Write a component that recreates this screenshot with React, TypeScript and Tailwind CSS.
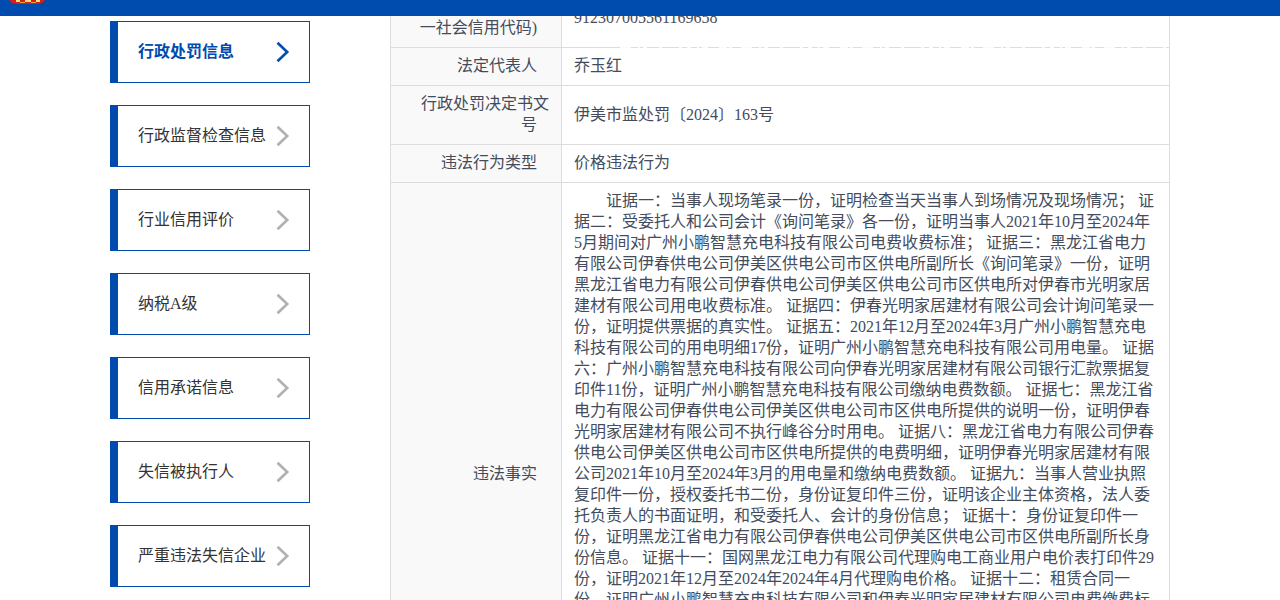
import React from 'react';

interface NavItem {
  label: string;
  active?: boolean;
}

interface DetailRow {
  label: string;
  value: string;
}

const navItems: NavItem[] = [
  { label: '行政处罚信息', active: true },
  { label: '行政监督检查信息' },
  { label: '行业信用评价' },
  { label: '纳税A级' },
  { label: '信用承诺信息' },
  { label: '失信被执行人' },
  { label: '严重违法失信企业' },
];

const rows: DetailRow[] = [
  { label: '行政相对人代码(统一社会信用代码)', value: '912307005561169658' },
  { label: '法定代表人', value: '乔玉红' },
  { label: '行政处罚决定书文号', value: '伊美市监处罚〔2024〕163号' },
  { label: '违法行为类型', value: '价格违法行为' },
];

const facts = [
  '证据一：当事人现场笔录一份，证明检查当天当事人到场情况及现场情况；',
  '证据二：受委托人和公司会计《询问笔录》各一份，证明当事人2021年10月至2024年5月期间对广州小鹏智慧充电科技有限公司电费收费标准；',
  '证据三：黑龙江省电力有限公司伊春供电公司伊美区供电公司市区供电所副所长《询问笔录》一份，证明黑龙江省电力有限公司伊春供电公司伊美区供电公司市区供电所对伊春市光明家居建材有限公司用电收费标准。',
  '证据四：伊春光明家居建材有限公司会计询问笔录一份，证明提供票据的真实性。',
  '证据五：2021年12月至2024年3月广州小鹏智慧充电科技有限公司的用电明细17份，证明广州小鹏智慧充电科技有限公司用电量。',
  '证据六：广州小鹏智慧充电科技有限公司向伊春光明家居建材有限公司银行汇款票据复印件11份，证明广州小鹏智慧充电科技有限公司缴纳电费数额。',
  '证据七：黑龙江省电力有限公司伊春供电公司伊美区供电公司市区供电所提供的说明一份，证明伊春光明家居建材有限公司不执行峰谷分时用电。',
  '证据八：黑龙江省电力有限公司伊春供电公司伊美区供电公司市区供电所提供的电费明细，证明伊春光明家居建材有限公司2021年10月至2024年3月的用电量和缴纳电费数额。',
  '证据九：当事人营业执照复印件一份，授权委托书二份，身份证复印件三份，证明该企业主体资格，法人委托负责人的书面证明，和受委托人、会计的身份信息；',
  '证据十：身份证复印件一份，证明黑龙江省电力有限公司伊春供电公司伊美区供电公司市区供电所副所长身份信息。',
  '证据十一：国网黑龙江电力有限公司代理购电工商业用户电价表打印件29份，证明2021年12月至2024年2024年4月代理购电价格。',
  '证据十二：租赁合同一份，证明广州小鹏智慧充电科技有限公司和伊春光明家居建材有限公司电费缴费标准。',
];

const NBSP = '\u00a0';

const Emblem: React.FC = () => (
  <svg className="block" width="40" height="5" viewBox="0 0 40 5" aria-hidden="true">
    <path d="M1 0H37L34 3L29 4H9L4 3Z" fill="#d81e1a" />
    <path d="M8 0H12V2H8ZM17 0H23V2H17ZM28 0H32V2H28Z" fill="#f7e07a" />
    <path d="M12 2H17V3H12ZM23 2H28V3H23Z" fill="#f0a828" />
  </svg>
);

const Chevron: React.FC<{ active?: boolean }> = ({ active }) => (
  <svg
    className={active ? 'shrink-0 text-[#004bae]' : 'shrink-0 text-[#b0b0b0]'}
    width="14"
    height="22"
    viewBox="0 0 14 22"
    fill="none"
    stroke="currentColor"
    strokeWidth="2.6"
    aria-hidden="true"
  >
    <path d="M1.5 1.8L11.2 11L1.5 20.2" />
  </svg>
);

// white flecks from the banner that break up the first row's border
const BannerFlecks: React.FC = () => (
  <svg className="absolute top-[31px] right-0 h-px w-[550px]" viewBox="0 0 550 1" aria-hidden="true">
    <path
      d="M0 0.5H550"
      stroke="#ffffff"
      strokeOpacity="0.85"
      strokeDasharray="11 7 2 3 4 12 3 17 3 5 4 6 2 3 6 11 8 2 3 9"
    />
  </svg>
);

const SideNav: React.FC = () => (
  <nav className="flex w-[200px] shrink-0 flex-col gap-[22px] pt-[5px]">
    {navItems.map((item) => (
      <a
        key={item.label}
        href="#"
        className={`flex h-[62px] items-center justify-between whitespace-nowrap border border-l-8 border-[#004bae] bg-white pr-[19px] pl-5 ${
          item.active ? 'font-bold text-[#004bae]' : 'text-[#333333]'
        }`}
      >
        <span className="pb-0.5">{item.label}</span>
        <Chevron active={item.active} />
      </a>
    ))}
  </nav>
);

const DetailTable: React.FC = () => (
  <table className="-mt-7 w-full table-fixed border-collapse text-[#444c5c]">
    <colgroup>
      <col className="w-[171px]" />
      <col />
    </colgroup>
    <tbody>
      {rows.map((row) => (
        <tr key={row.label}>
          <th
            scope="row"
            className="border border-[#dddddd] bg-[#f9f9f9] px-3 pt-[7px] pb-[9px] text-right align-middle font-normal"
          >
            {row.label + NBSP + NBSP + NBSP}
          </th>
          <td className="border border-[#dddddd] px-3 pt-[7px] pb-[9px] align-middle">{row.value}</td>
        </tr>
      ))}
      <tr className="h-[584px]">
        <th
          scope="row"
          className="border border-[#dddddd] bg-[#f9f9f9] px-3 pt-[7px] pb-[9px] text-right align-middle font-normal"
        >
          {'违法事实' + NBSP + NBSP + NBSP}
        </th>
        <td className="border border-[#dddddd] px-3 pt-[7px] pb-[9px] align-top">
          <p className="indent-8">{facts.join(' ')}</p>
        </td>
      </tr>
    </tbody>
  </table>
);

export default function App() {
  return (
    <div className="h-screen overflow-hidden bg-white font-['Liberation_Serif','Noto_Sans_CJK_SC',sans-serif] text-base leading-[21px]">
      <header className="relative z-10 h-4 bg-[#004bae] pl-2">
        <Emblem />
      </header>
      <div className="mx-auto flex max-w-[1060px] gap-20">
        <SideNav />
        <main className="relative min-w-0 flex-1">
          <DetailTable />
          <BannerFlecks />
        </main>
      </div>
    </div>
  );
}
